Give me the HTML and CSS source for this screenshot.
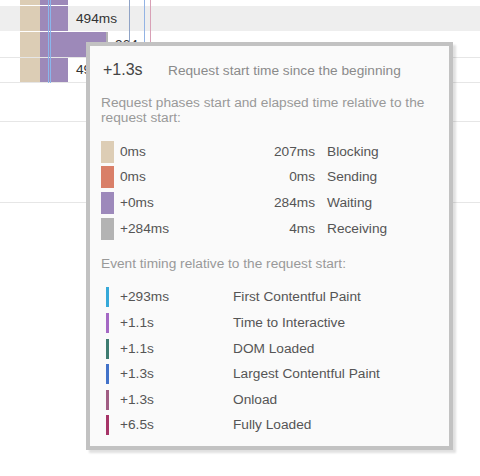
FILE: index.html
```html
<!DOCTYPE html>
<html>
<head>
<meta charset="utf-8">
<link rel="stylesheet" href="styles.css">
</head>
<body>
<div class="page">
  <div class="waterfall">
    <div class="row r0">
      <span class="bar block" style="width:20px"></span><span class="bar wait" style="width:28px"></span>
    </div>
    <div class="row r1 alt">
      <span class="bar block" style="width:20px"></span><span class="bar wait" style="width:28px"></span>
      <span class="label">494ms</span>
    </div>
    <div class="row r2">
      <span class="bar block" style="width:20px"></span><span class="bar wait" style="width:66px"></span><span class="bar recv" style="width:2px"></span>
      <span class="label label-far">964ms</span>
    </div>
    <div class="row r3">
      <span class="bar block" style="width:20px"></span><span class="bar wait" style="width:28px"></span>
      <span class="label">494ms</span>
    </div>
    <div class="band b1"></div>
    <div class="band b2"></div>

    <span class="vline v-fcp" style="left:48px"></span>
    <span class="vline v-fcp" style="left:50px"></span>
    <span class="vline v-dom" style="left:129px"></span>
    <span class="vline v-lcp" style="left:144px"></span>
    <span class="vline v-load" style="left:150px"></span>
  </div>

  <div class="tooltip">
    <div class="head">
      <span class="head-time">+1.3s</span>
      <span class="head-desc">Request start time since the beginning</span>
    </div>
    <p class="note">Request phases start and elapsed time relative to the request start:</p>
    <div class="phases">
      <span class="swatch block"></span><span class="start">0ms</span><span class="dur">207ms</span><span class="name">Blocking</span>
      <span class="swatch send"></span><span class="start">0ms</span><span class="dur">0ms</span><span class="name">Sending</span>
      <span class="swatch wait"></span><span class="start">+0ms</span><span class="dur">284ms</span><span class="name">Waiting</span>
      <span class="swatch recv"></span><span class="start">+284ms</span><span class="dur">4ms</span><span class="name">Receiving</span>
    </div>
    <p class="note note-events">Event timing relative to the request start:</p>
    <div class="events">
      <span class="marker m-fcp"></span><span class="etime">+293ms</span><span class="ename">First Contentful Paint</span>
      <span class="marker m-tti"></span><span class="etime">+1.1s</span><span class="ename">Time to Interactive</span>
      <span class="marker m-dom"></span><span class="etime">+1.1s</span><span class="ename">DOM Loaded</span>
      <span class="marker m-lcp"></span><span class="etime">+1.3s</span><span class="ename">Largest Contentful Paint</span>
      <span class="marker m-load"></span><span class="etime">+1.3s</span><span class="ename">Onload</span>
      <span class="marker m-full"></span><span class="etime">+6.5s</span><span class="ename">Fully Loaded</span>
    </div>
  </div>
</div>
</body>
</html>
```

FILE: styles.css
```css
* { box-sizing: border-box; }

html, body {
  margin: 0;
  padding: 0;
  background: #ffffff;
}

body {
  font-family: "Liberation Sans", Arial, sans-serif;
  font-size: 13.7px;
  color: #555;
}

.page {
  position: relative;
  width: 480px;
  height: 476px;
  overflow: hidden;
}

.waterfall {
  position: relative;
}

.row {
  display: flex;
  align-items: stretch;
  padding-left: 20px;
  height: 26px;
  border-bottom: 1px solid #e6e6e6;
}

.row.r0 { height: 6px; border-bottom-color: #ffffff; }
.row.r1 { height: 26px; border-bottom-color: #ffffff; }
.row.r3 { height: 25px; }
.row.alt { background: #eeeeee; }

.bar { display: block; height: 100%; }
.bar.block { background: #dccdb5; }
.bar.wait { background: #9d89b9; }
.bar.recv { background: #b4b4b4; }

.label {
  align-self: center;
  margin-left: 8px;
  color: #333;
  line-height: 16px;
}
.label-far { margin-left: 7px; }

.band { border-bottom: 1px solid #e6e6e6; }
.band.b1 { height: 39px; }
.band.b2 { height: 81px; }

.vline {
  position: absolute;
  top: 0;
  width: 1px;
  height: 83px;
}
.v-fcp { background: #8ab6ec; }
.v-dom { background: #8fa3c6; }
.v-lcp { background: #93b3e4; }
.v-load { background: #d8a0b6; }

/* tooltip */
.tooltip {
  position: absolute;
  left: 86px;
  top: 42px;
  width: 367px;
  padding: 14px 11px 8px 11px;
  background: #fafafa;
  border: 4px solid #c2c2c2;
  box-shadow: 3px 3px 2px rgba(0, 0, 0, 0.12);
}

.head {
  display: flex;
  align-items: baseline;
  height: 20px;
  line-height: 20px;
}
.head-time {
  width: 67px;
  padding-left: 2px;
  font-size: 16px;
  color: #444;
}
.head-desc {
  color: #8a8a8a;
  font-size: 13.7px;
}

.note {
  margin: 15px 0 0 0;
  line-height: 15px;
  color: #999;
}
.note-events { margin-top: 16px; }

.phases {
  display: grid;
  grid-template-columns: 13px 110px 79px 1fr;
  grid-auto-rows: 22px;
  column-gap: 6px;
  row-gap: 3.7px;
  align-items: center;
  margin-top: 15.5px;
  line-height: 16px;
}
.swatch { align-self: stretch; }
.swatch.block { background: #ddcdb5; }
.swatch.send { background: #d97f68; }
.swatch.wait { background: #9d89bb; }
.swatch.recv { background: #b3b3b3; }
.dur { text-align: right; }
.name { padding-left: 6px; }

.events {
  display: grid;
  grid-template-columns: 13px 107px 1fr;
  grid-auto-rows: 25.6px;
  column-gap: 6px;
  align-items: center;
  margin-top: 14px;
  line-height: 16px;
}
.marker {
  display: block;
  width: 3px;
  height: 20px;
  margin-left: 5px;
}
.m-fcp { background: #36a9d9; }
.m-tti { background: #a468c4; }
.m-dom { background: #3d7b70; }
.m-lcp { background: #4272c9; }
.m-load { background: #a05d83; }
.m-full { background: #a63467; }
```
